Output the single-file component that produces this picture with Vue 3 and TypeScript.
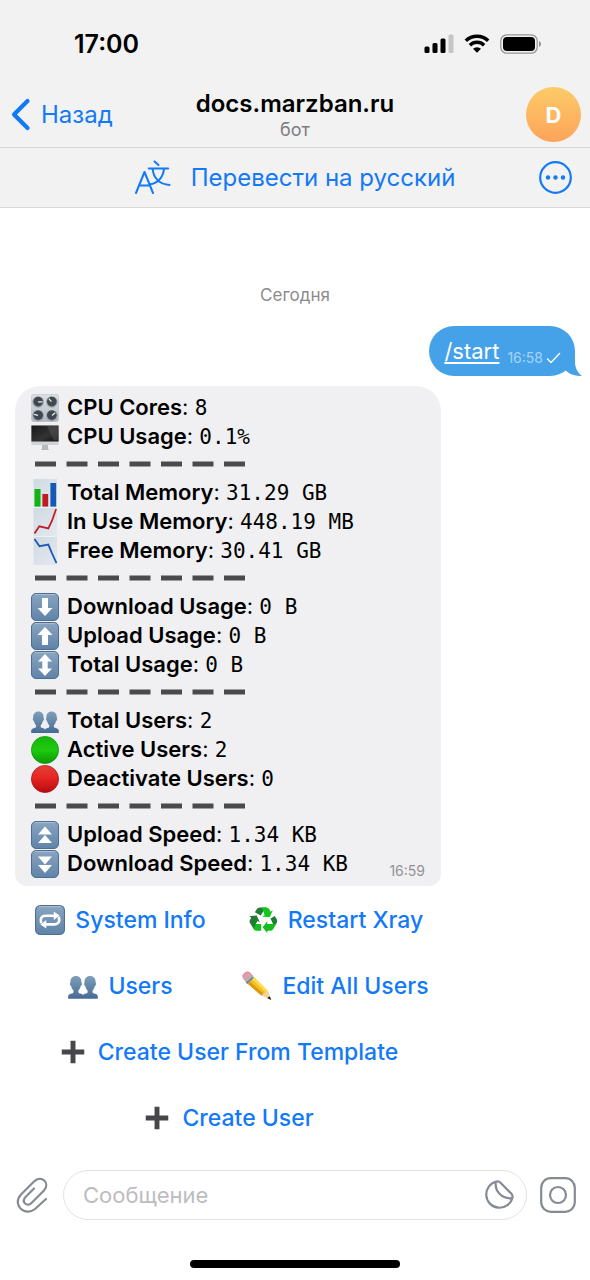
<script setup lang="ts">
import { ref } from 'vue'

interface StatRow {
  icon: string
  label: string
  value: string
}

interface KeyboardButton {
  icon: string
  label: string
}

const draft = ref('')

const groups: StatRow[][] = [
  [
    { icon: 'knobs', label: 'CPU Cores', value: '8' },
    { icon: 'desktop', label: 'CPU Usage', value: '0.1%' },
  ],
  [
    { icon: 'bars', label: 'Total Memory', value: '31.29 GB' },
    { icon: 'rise', label: 'In Use Memory', value: '448.19 MB' },
    { icon: 'fall', label: 'Free Memory', value: '30.41 GB' },
  ],
  [
    { icon: 'down', label: 'Download Usage', value: '0 B' },
    { icon: 'up', label: 'Upload Usage', value: '0 B' },
    { icon: 'updown', label: 'Total Usage', value: '0 B' },
  ],
  [
    { icon: 'people', label: 'Total Users', value: '2' },
    { icon: 'green', label: 'Active Users', value: '2' },
    { icon: 'red', label: 'Deactivate Users', value: '0' },
  ],
  [
    { icon: 'fastup', label: 'Upload Speed', value: '1.34 KB' },
    { icon: 'fastdown', label: 'Download Speed', value: '1.34 KB' },
  ],
]

const keyboard: KeyboardButton[][] = [
  [
    { icon: 'repeat', label: 'System Info' },
    { icon: 'recycle', label: 'Restart Xray' },
  ],
  [
    { icon: 'people', label: 'Users' },
    { icon: 'pencil', label: 'Edit All Users' },
  ],
  [{ icon: 'plus', label: 'Create User From Template' }],
  [{ icon: 'plus', label: 'Create User' }],
]
</script>

<template>
  <div class="screen">
    <svg class="sprite" aria-hidden="true">
      <defs>
        <linearGradient id="g-key" x1="0" y1="0" x2="0" y2="1">
          <stop offset="0" stop-color="#89a5c0" />
          <stop offset="1" stop-color="#5f83a9" />
        </linearGradient>
        <linearGradient id="g-paper" x1="0" y1="0" x2="1" y2="1">
          <stop offset="0" stop-color="#d0d9e2" />
          <stop offset="1" stop-color="#e3e9ef" />
        </linearGradient>
        <linearGradient id="g-panel" x1="0" y1="0" x2="0" y2="1">
          <stop offset="0" stop-color="#dce0e4" />
          <stop offset="1" stop-color="#b3bcc5" />
        </linearGradient>
        <linearGradient id="g-people" x1="0" y1="0" x2="0" y2="1">
          <stop offset="0" stop-color="#7f9fb9" />
          <stop offset="1" stop-color="#466a94" />
        </linearGradient>
        <linearGradient id="g-green" x1="0" y1="0" x2="0" y2="1">
          <stop offset="0" stop-color="#16b70a" />
          <stop offset="0.5" stop-color="#1fca10" />
          <stop offset="1" stop-color="#099900" />
        </linearGradient>
        <linearGradient id="g-red" x1="0" y1="0" x2="0" y2="1">
          <stop offset="0" stop-color="#e2403a" />
          <stop offset="0.45" stop-color="#e62723" />
          <stop offset="1" stop-color="#b60b0e" />
        </linearGradient>
        <linearGradient id="g-screen" x1="0" y1="0" x2="1" y2="1">
          <stop offset="0" stop-color="#181818" />
          <stop offset="0.6" stop-color="#333" />
          <stop offset="1" stop-color="#111" />
        </linearGradient>
      </defs>
      <symbol id="i-key" viewBox="0 0 28 28">
        <rect x="0.5" y="0.5" width="27" height="27" rx="4.5" fill="url(#g-key)" stroke="#4e6e90" />
        <path d="M4 1.6h20" stroke="#b2c8dc" stroke-width="0.8" />
      </symbol>
      <symbol id="i-knobs" viewBox="0 0 28 28">
        <rect x="0.3" y="0.3" width="27.4" height="27.4" rx="3" fill="url(#g-panel)" stroke="#b5bdc5" stroke-width="0.6" />
        <g fill="#9aa4ae">
          <circle cx="7.2" cy="8" r="5.8" /><circle cx="20.8" cy="8" r="5.8" />
          <circle cx="7.2" cy="21.6" r="5.8" /><circle cx="20.8" cy="21.6" r="5.8" />
        </g>
        <g fill="#42484e">
          <circle cx="7.2" cy="7.6" r="4.8" /><circle cx="20.8" cy="7.6" r="4.8" />
          <circle cx="7.2" cy="21.2" r="4.8" /><circle cx="20.8" cy="21.2" r="4.8" />
        </g>
        <path d="M7 7.8h4.6M20.4 7.6l-2.6-3M7 21.4l-4-1M21 21.4l3.2-2.6" stroke="#e8edf0" stroke-width="1.3" />
      </symbol>
      <symbol id="i-desktop" viewBox="0 0 28 28">
        <path d="M11 22h6v3.6l1 1.4h-8l1-1.4z" fill="#b5b9bc" />
        <rect x="0.4" y="2.5" width="27.2" height="19.6" rx="0.8" fill="#d0d2d4" />
        <rect x="0.4" y="2.5" width="27.2" height="16" fill="url(#g-screen)" />
        <path d="M16 3l10.8 0v14.5h-4z" fill="#555" opacity="0.5" />
      </symbol>
      <symbol id="i-bars" viewBox="0 0 28 28">
        <rect x="2.5" width="23.5" height="28" fill="url(#g-paper)" />
        <rect x="3.5" y="10" width="6" height="17.6" fill="#10b30f" />
        <rect x="11.4" y="15" width="5.8" height="12.6" fill="#c01b20" />
        <rect x="19.4" y="4" width="5.8" height="23.6" fill="#1559b5" />
      </symbol>
      <symbol id="i-rise" viewBox="0 0 28 28">
        <rect x="2.5" width="23.5" height="28" fill="url(#g-paper)" />
        <path d="M3.5 25.5l4.8-7.2 9 2.1 3.6-7.4 4.2-12" fill="none" stroke="#c01f25" stroke-width="1.8" />
      </symbol>
      <symbol id="i-fall" viewBox="0 0 28 28">
        <rect x="2.5" width="23.5" height="28" fill="url(#g-paper)" />
        <path d="M3.5 2l5 7.2 8.800-1.600 3.400 8 4.800 10.500" fill="none" stroke="#1c5ab8" stroke-width="1.8" />
      </symbol>
      <symbol id="i-down" viewBox="0 0 28 28">
        <use href="#i-key" />
        <path d="M11 5h6v10h4.5L14 23l-7.500-8H11z" fill="#fff" />
      </symbol>
      <symbol id="i-up" viewBox="0 0 28 28">
        <use href="#i-key" />
        <path d="M11 23h6V13h4.500L14 5l-7.500 8H11z" fill="#fff" />
      </symbol>
      <symbol id="i-updown" viewBox="0 0 28 28">
        <use href="#i-key" />
        <path d="M14 3l7 7.500h-4.300v7H21L14 25l-7-7.500h4.300v-7H7z" fill="#fff" />
      </symbol>
      <symbol id="i-fastup" viewBox="0 0 28 28">
        <use href="#i-key" />
        <path d="M14 5.500l7 8H7zM14 14l7 8H7z" fill="#fff" />
      </symbol>
      <symbol id="i-fastdown" viewBox="0 0 28 28">
        <use href="#i-key" />
        <path d="M14 14.500l7-8H7zM14 23l7-8H7z" fill="#fff" />
      </symbol>
      <symbol id="i-people" viewBox="0 0 28 28">
        <path d="M0.200 26v-2.400c0-1.200 1.200-2 3-2.500 1.300-.4 1.900-.7 1.900-1.600v-1.300C3.800 16.800 3.300 15.500 2.900 14c-1-.2-1.500-2.700-.7-3C1.900 7 4.200 4.600 7.400 4.600s5.500 2.400 5.200 6.400c.8.3.3 2.800-.7 3-.4 1.500-.9 2.800-2.200 4.200v1.300c0 .9.600 1.200 1.900 1.600 1.100.3 1.900.7 2.400 1.300V26z" fill="url(#g-people)" />
        <path d="M27.800 26v-2.400c0-1.200-1.200-2-3-2.500-1.300-.4-1.900-.7-1.900-1.600v-1.300c1.300-1.400 1.800-2.700 2.200-4.200 1-.2 1.500-2.700.7-3 .3-4-2-6.400-5.200-6.400S15.100 7 15.400 11c-.8.3-.3 2.800.7 3 .4 1.500.9 2.800 2.200 4.200v1.300c0 .9-.6 1.200-1.900 1.600-1.100.3-1.900.7-2.400 1.300V26z" fill="url(#g-people)" />
      </symbol>
      <symbol id="i-green" viewBox="0 0 28 28">
        <circle cx="14" cy="14" r="13.600" fill="url(#g-green)" stroke="#0a8f05" stroke-width="0.700" />
      </symbol>
      <symbol id="i-red" viewBox="0 0 28 28">
        <circle cx="14" cy="14" r="13.600" fill="url(#g-red)" stroke="#a80d10" stroke-width="0.700" />
      </symbol>
      <symbol id="i-repeat" viewBox="0 0 28 28">
        <use href="#i-key" />
        <path d="M5.600 16c-1-3.700.8-6 4.400-6h8.500M22.400 12c1 3.700-.8 6-4.400 6H9.500" fill="none" stroke="#fff" stroke-width="2.500" stroke-linecap="round" />
        <path d="M17.500 6l5.500 3.800-5.500 4.200zM10.500 14L5 18.200l5.500 3.800z" fill="#fff" />
      </symbol>
      <symbol id="i-recycle" viewBox="0 0 28 28">
        <path d="M8.300 3.800Q9.200 2.300 11 2.300h6.500q-1.500.4-2.200 1.800l-3.400 5.800-5.500-3.100z" fill="#217c36" />
        <path d="M13 2.300h4.200q1.600 0 2.500 1.500l1.400 2.400 2.100-1.200-2.900 6.500-7.100-.7 2.300-1.400z" fill="#14c71b" />
        <path d="M21 12.500l4-2.300 1.800 3.200q1 1.800 0 3.400-1 1.500-3.300 1.400z" fill="#217c36" />
        <path d="M26.800 17l-3.400 5.600q-.9 1.500-2.700 1.500H18v2.300l-4.300-5.700 4.300-5.600v2.600h5.500q2.100.2 3.300-.7z" fill="#14bd1c" />
        <path d="M12.300 17.700v6.400H8q-1.900 0-2.800-1.600-.8-1.400.3-3.400l.8-1.400z" fill="#14bd1c" />
        <path d="M5.200 22.500l-3.300-5.600q-.9-1.500 0-3.100l1.200-2-2-1.200 7-.8 3 6.500-2.200-1.300-3 5q-.9 1.500-.7 2.500z" fill="#217c36" />
      </symbol>
      <symbol id="i-pencil" viewBox="0 0 28 28">
        <path d="M2.500 1.800Q4.900-.2 7.300 1.500l3 3.300-6.200 5.700L1 6.400Q-.3 3.900 2.500 1.800z" fill="#e99aaa" stroke="#c47785" stroke-width="0.500" />
        <path d="M8.800 3.300l3.500 3.500-6.600 6-3.300-3.900z" fill="#adb5bb" />
        <path d="M9.700 5.300l-6 5.500 1 1.300L11 6.500z" fill="#78838b" />
        <path d="M11.500 6l13 13.200-6.200 3.900L5.500 12z" fill="#f5bf21" />
        <path d="M5.500 12l2-1.900L20.700 21.600l-2.400 1.500z" fill="#d99a13" />
        <path d="M9.600 7.800l2-1.900 13 13.300-2 1.300z" fill="#ffd951" />
        <path d="M24.500 19.200L27.300 27l-9-3.900q0-1.900 1.900-1.900 0-1.500 2-1.200.4-1.300 2.300-.8z" fill="#efd2a3" />
        <path d="M26.100 23.700L27.300 27l-3.600-1.500q.8-1.700 2.400-1.800z" fill="#222" />
      </symbol>
      <symbol id="i-plus" viewBox="0 0 28 28">
        <path d="M11.700 3.500h4.600v8.200h8.200v4.600h-8.200v8.200h-4.600v-8.200H3.500v-4.600h8.200z" fill="#47474a" />
      </symbol>
    </svg>

    <header class="top">
      <div class="status">
        <span class="clock">17:00</span>
        <div class="indicators">
          <svg width="30" height="20" viewBox="0 0 30 20" aria-hidden="true">
            <rect x="0.500" y="12.500" width="5" height="6.500" rx="1.500" />
            <rect x="8.500" y="9" width="5" height="10" rx="1.500" />
            <rect x="16.500" y="4.500" width="5" height="14.500" rx="1.500" />
            <rect x="24.500" y="0.500" width="5" height="18.500" rx="1.500" fill="#c5c5c5" />
          </svg>
          <svg width="26" height="20" viewBox="0 0 26 20" aria-hidden="true">
            <path d="M1.800 6.800a16 16 0 0 1 22.400 0M5.900 11.200a10.200 10.200 0 0 1 14.200 0" fill="none" stroke="#000" stroke-width="3.400" />
            <path d="M13 18.800l-4-4a5.700 5.700 0 0 1 8 0z" />
          </svg>
          <svg width="42" height="20" viewBox="0 0 42 20" aria-hidden="true">
            <rect x="0.800" y="0.800" width="36.400" height="18.400" rx="6" fill="none" stroke="#979797" stroke-width="1.300" />
            <rect x="3" y="3" width="32" height="14" rx="4" />
            <path d="M39 7v6q2-.9 2-3t-2-3z" fill="#8d8d8d" />
          </svg>
        </div>
      </div>
      <nav class="nav">
        <button class="back" type="button">
          <svg width="20" height="33" viewBox="0 0 20 33" aria-hidden="true">
            <path d="M16.500 3L3 16.500l13.500 13.500" fill="none" stroke="#1279f8" stroke-width="4.200" stroke-linecap="round" stroke-linejoin="round" />
          </svg>
          <span>Назад</span>
        </button>
        <div class="title">
          <h1>docs.marzban.ru</h1>
          <p>бот</p>
        </div>
        <button class="avatar" type="button">D</button>
      </nav>
      <div class="translate">
        <button class="translate-action" type="button">
          <svg width="36" height="36" viewBox="0 0 36 36" aria-hidden="true">
            <g fill="none" stroke="#1279f8" stroke-width="2" stroke-linecap="round" stroke-linejoin="round">
              <path d="M1 33l8.500-21 8.500 21M4.500 25.500h10" />
              <path d="M19.500 1.500l4 3.500M13.800 8.500h19.400M17.500 8.500c1 9 6 15.500 17 16.500M29 8.500c-.5 8-5.500 14.500-13.500 15.800" />
            </g>
          </svg>
          <span>Перевести на русский</span>
        </button>
        <button class="more" type="button" aria-label="Ещё">
          <svg width="33" height="33" viewBox="0 0 33 33" aria-hidden="true">
            <circle cx="16.500" cy="16.500" r="15.300" fill="none" stroke="#1279f8" stroke-width="2.200" />
            <g fill="#1279f8"><circle cx="9" cy="16.500" r="2.200" /><circle cx="16.500" cy="16.500" r="2.200" /><circle cx="24" cy="16.500" r="2.200" /></g>
          </svg>
        </button>
      </div>
    </header>

    <main class="chat">
      <p class="day">Сегодня</p>

      <div class="outgoing">
        <a href="#start">/start</a>
        <span class="sent">
          <time>16:58</time>
          <svg width="15" height="12" viewBox="0 0 15 12" aria-hidden="true">
            <path d="M1 6.500l4 4L14 1" fill="none" stroke="#fff" stroke-width="1.300" />
          </svg>
        </span>
        <svg class="tail" width="22" height="24" viewBox="0 0 22 24" aria-hidden="true">
          <path d="M15 0v10c0 6 3 11 7 14-6 0-11-1-15-4.500L0 14z" fill="#45a2e9" />
        </svg>
      </div>

      <div class="incoming">
        <article class="report">
          <section v-for="(group, g) in groups" :key="g">
            <svg v-if="g > 0" class="dashes" width="220" height="27" viewBox="0 0 220 27" aria-hidden="true">
              <rect v-for="n in 7" :key="n" :x="4 + (n - 1) * 31.5" y="10.500" width="21" height="5" fill="#4a4a4c" />
            </svg>
            <p v-for="row in group" :key="row.label" class="row">
              <svg class="emoji" aria-hidden="true"><use :href="'#i-' + row.icon" /></svg>
              <span><strong>{{ row.label }}</strong>: <code>{{ row.value }}</code></span>
            </p>
          </section>
          <time class="received">16:59</time>
        </article>

        <div class="keyboard">
          <div v-for="(buttons, k) in keyboard" :key="k" class="keys">
            <button v-for="button in buttons" :key="button.label" type="button">
              <svg class="emoji large" aria-hidden="true"><use :href="'#i-' + button.icon" /></svg>
              <span>{{ button.label }}</span>
            </button>
          </div>
        </div>
      </div>
    </main>

    <footer>
      <form class="composer" @submit.prevent>
        <button type="button" aria-label="Прикрепить">
          <svg width="32" height="36" viewBox="0 0 32 36" aria-hidden="true">
            <path d="M18 11.500L9.500 20c-4.500 5 1.500 10.500 6 6L28 13.500C34.500 6 25.500-2.500 18 4.500L5 17.500C-4.500 28 9 40 19 32l11-10" fill="none" stroke="#858b93" stroke-width="2.200" stroke-linecap="round" stroke-linejoin="round" />
          </svg>
        </button>
        <div class="field">
          <input v-model="draft" type="text" placeholder="Сообщение" aria-label="Сообщение" />
          <button type="button" aria-label="Стикеры">
            <svg width="30" height="30" viewBox="0 0 30 30" aria-hidden="true">
              <path d="M12.500 1.500A13.300 13.300 0 1 0 28.500 17.500c.3-1.500-.2-2.700-1.300-3.900L16.500 2.700c-1.200-1.200-2.500-1.500-4-1.200zM11.800 1.700C10.500 11 17.500 19 28.300 18.300" fill="none" stroke="#858b93" stroke-width="2.200" stroke-linejoin="round" />
            </svg>
          </button>
        </div>
        <button type="button" aria-label="Видеосообщение">
          <svg width="36" height="36" viewBox="0 0 36 36" aria-hidden="true">
            <rect x="1.200" y="1.200" width="33.600" height="33.600" rx="9.500" fill="none" stroke="#858b93" stroke-width="2.200" />
            <circle cx="18" cy="18" r="8" fill="none" stroke="#858b93" stroke-width="2.200" />
          </svg>
        </button>
      </form>
      <div class="home"></div>
    </footer>
  </div>
</template>

<style>
body {
  background: #fff;
}
</style>

<style scoped>
.screen {
  display: flex;
  flex-direction: column;
  min-height: 100vh;
  background: #fff;
  color: #000;
  font-family: Inter, 'Liberation Sans', sans-serif;
  font-size: 22px;
}

.screen * {
  box-sizing: border-box;
}

.sprite {
  position: absolute;
  width: 0;
  height: 0;
}

svg {
  display: block;
  flex: none;
}

button {
  display: flex;
  align-items: center;
  justify-content: center;
  margin: 0;
  padding: 0;
  border: 0;
  background: none;
  color: #1279f8;
  font: inherit;
  cursor: pointer;
}

h1,
p {
  margin: 0;
}

.top {
  background: #f2f2f2;
}

.status {
  display: flex;
  align-items: center;
  justify-content: space-between;
  height: 87px;
  padding: 1px 48px 0 74px;
}

.clock {
  font-size: 25px;
  font-weight: 600;
}

.indicators {
  display: flex;
  align-items: center;
  gap: 10px;
}

.nav {
  display: grid;
  grid-template-columns: 1fr auto 1fr;
  align-items: center;
  padding: 0 9px 5px;
  border-bottom: 1px solid #d8d8d8;
}

.back {
  justify-self: start;
  gap: 10px;
  padding-left: 2px;
  font-size: 24px;
}

.title {
  text-align: center;
}

.title h1 {
  font-size: 24px;
  font-weight: 600;
  line-height: 30px;
}

.title p {
  color: #7d7d7f;
  font-size: 18px;
  line-height: 22px;
}

.avatar {
  justify-self: end;
  width: 55px;
  height: 55px;
  border-radius: 50%;
  background: linear-gradient(#fdcb68, #fda35a);
  color: #fff;
  font-weight: 700;
}

.translate {
  display: grid;
  grid-template-columns: 1fr auto 1fr;
  align-items: center;
  height: 60px;
  padding: 0 18px;
  border-bottom: 1px solid #d8d8d8;
}

.translate-action {
  grid-column: 2;
  gap: 20px;
  font-size: 24px;
}

.more {
  justify-self: end;
}

.chat {
  display: flex;
  flex: 1;
  flex-direction: column;
  padding: 77px 15px 0;
}

.day {
  margin-bottom: 21px;
  color: #8b8b8f;
  font-size: 17px;
  line-height: 20px;
  text-align: center;
}

.outgoing {
  position: relative;
  display: flex;
  align-self: flex-end;
  align-items: center;
  gap: 8px;
  height: 50px;
  padding: 0 14px 0 15px;
  border-radius: 25px;
  background: #45a2e9;
}

.outgoing a {
  color: #fff;
  text-underline-offset: 3px;
}

.sent {
  display: flex;
  align-items: center;
  gap: 3px;
  padding-top: 14px;
  color: #a5d3f6;
  font-size: 14px;
  line-height: 18px;
}

.tail {
  position: absolute;
  right: -7px;
  bottom: 0;
}

.incoming {
  width: 100%;
  max-width: 426px;
  margin-top: 10px;
}

.report {
  position: relative;
  padding: 7px 16px 8px;
  border-radius: 25px 25px 12px 12px;
  background: #f0f0f2;
}

.row {
  display: flex;
  align-items: center;
  gap: 8px;
  height: 29px;
  line-height: 29px;
  white-space: nowrap;
}

.row strong {
  font-weight: 600;
}

.row code {
  font-family: 'DejaVu Sans Mono', monospace;
  font-size: 21px;
}

.emoji {
  width: 28px;
  height: 28px;
}

.emoji.large {
  width: 30px;
  height: 30px;
}

.received {
  position: absolute;
  right: 16px;
  bottom: 5px;
  color: #929296;
  font-size: 14px;
  line-height: 20px;
}

.keyboard {
  display: grid;
  gap: 4px;
  margin-top: 3px;
}

.keys {
  display: grid;
  grid-auto-columns: 1fr;
  grid-auto-flow: column;
  gap: 4px;
  height: 62px;
}

.keys button {
  gap: 10px;
  font-size: 23px;
  font-weight: 500;
  white-space: nowrap;
}

.composer {
  display: flex;
  align-items: center;
  gap: 13px;
  padding: 0 14px 0 16px;
}

.field {
  display: flex;
  flex: 1;
  align-items: center;
  height: 50px;
  margin-left: 2px;
  padding: 0 12px 0 19px;
  border: 1px solid #e2e2e4;
  border-radius: 25px;
}

input {
  flex: 1;
  min-width: 0;
  padding: 0;
  border: 0;
  outline: 0;
  background: none;
  color: #000;
  font: inherit;
}

input::placeholder {
  color: #bdbdc0;
  opacity: 1;
}

.home {
  width: 210px;
  height: 8px;
  margin: 40px auto 12px;
  border-radius: 4px;
  background: #000;
}
</style>
